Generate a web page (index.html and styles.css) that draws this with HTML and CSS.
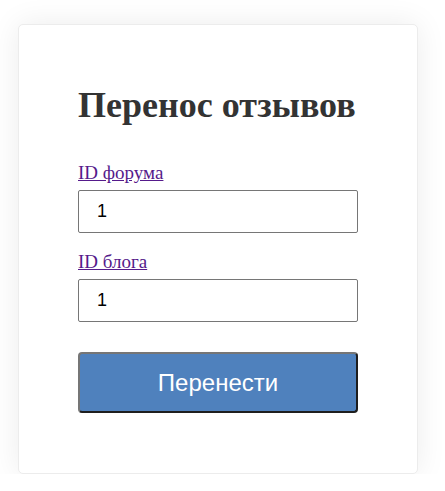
FILE: index.html
```html
<!DOCTYPE html>
<html lang="ru">
<head>
<meta charset="utf-8">
<title>Перенос отзывов</title>
<link rel="stylesheet" href="styles.css">
</head>
<body>
<div class="card">
  <h1 class="title">Перенос отзывов</h1>
  <form class="form">
    <div class="field">
      <a class="label" href="#forum">ID форума</a>
      <input class="input" type="text" value="1">
    </div>
    <div class="field">
      <a class="label" href="#blog">ID блога</a>
      <input class="input" type="text" value="1">
    </div>
    <button class="btn" type="button">Перенести</button>
  </form>
</div>
</body>
</html>
```

FILE: styles.css
```css
html, body {
  margin: 0;
  padding: 0;
  background: #ffffff;
}
body {
  padding: 24px 0 0 18px;
}
.card {
  box-sizing: border-box;
  width: 400px;
  height: 450px;
  background: #ffffff;
  border: 1px solid #ececec;
  border-radius: 5px;
  box-shadow: 0 0 30px rgba(0, 0, 0, 0.08);
  padding: 0 59px;
}
.title {
  font-family: "Liberation Serif", "Times New Roman", serif;
  font-weight: bold;
  font-size: 36px;
  line-height: 42px;
  color: #333333;
  margin: 59px 0 0 0;
}
.form {
  display: flex;
  flex-direction: column;
  margin-top: 36px;
}
.field {
  display: flex;
  flex-direction: column;
  align-items: flex-start;
  margin-bottom: 18px;
}
.label {
  font-family: "Liberation Serif", "Times New Roman", serif;
  font-size: 19px;
  line-height: 22px;
  color: #551a8b;
  text-decoration: underline;
  margin-bottom: 6px;
}
.input {
  box-sizing: border-box;
  width: 280px;
  height: 43px;
  border: 1px solid #767676;
  border-radius: 2px;
  padding: 0 18px;
  font-family: "Liberation Sans", Arial, sans-serif;
  font-size: 18px;
  color: #000000;
  background: #ffffff;
  outline: none;
}
.btn {
  box-sizing: border-box;
  width: 280px;
  height: 61px;
  margin-top: 12px;
  background: #4f81bd;
  color: #ffffff;
  font-family: "Liberation Sans", Arial, sans-serif;
  font-size: 24px;
  border-style: solid;
  border-width: 2px;
  border-color: #767676 #1e1e1e #1e1e1e #767676;
  border-radius: 4px;
  padding: 0;
}
```
